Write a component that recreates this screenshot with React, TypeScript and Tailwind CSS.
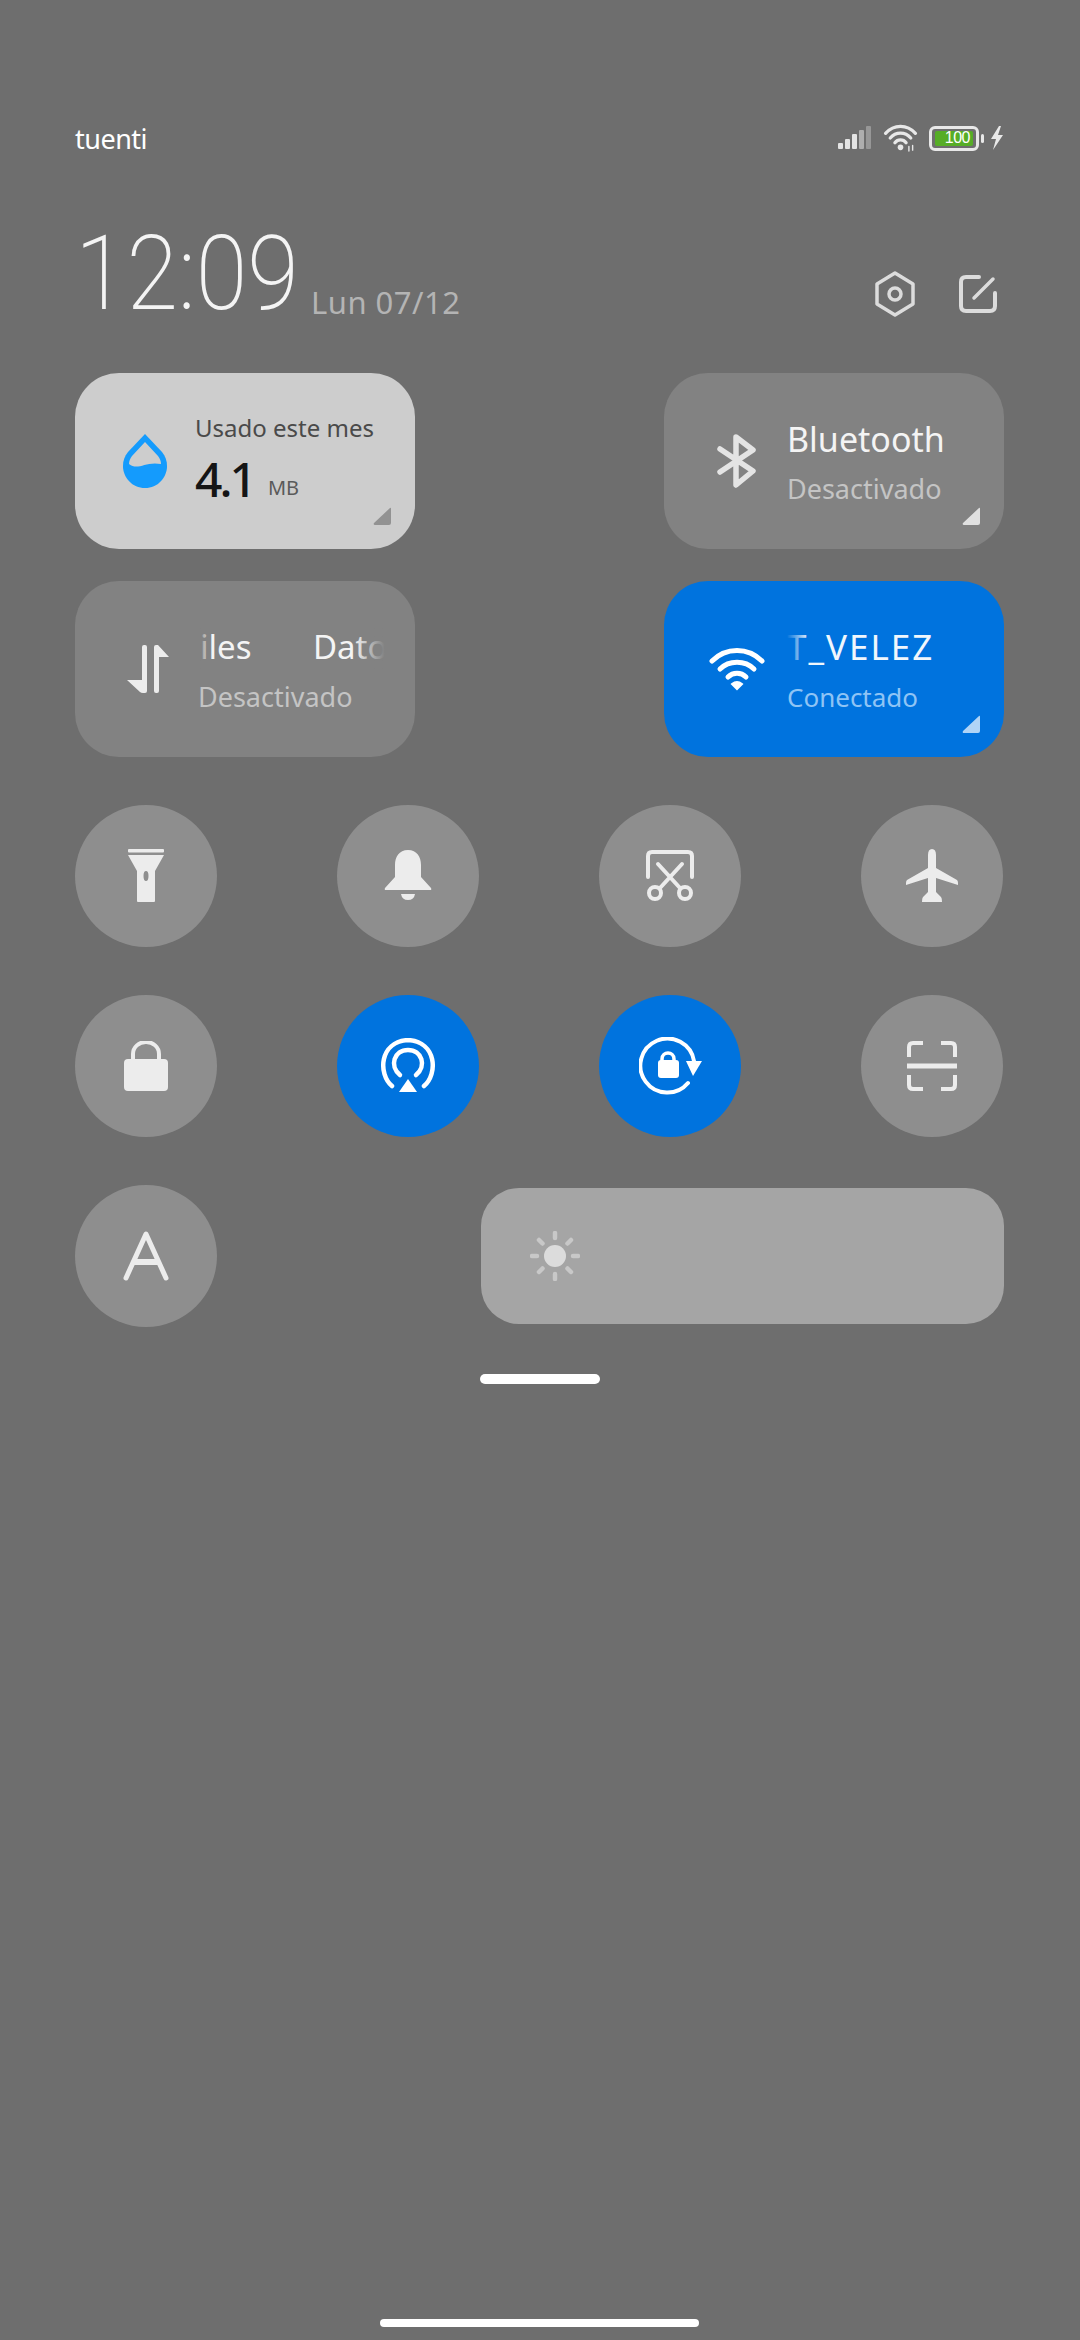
import { ReactNode } from "react";

const hand = "font-['Noto_Sans','DejaVu_Sans',sans-serif]";

function Signal() {
  return (
    <svg width="34" height="24" viewBox="0 0 34 24" fill="#e4e4e4">
      <rect x="0" y="17" width="5" height="6" rx="1" />
      <rect x="7" y="13" width="5" height="10" rx="1" />
      <rect x="14" y="8" width="5" height="15" rx="1" />
      <rect x="21" y="4" width="5" height="19" rx="1" opacity="0.55" />
      <rect x="28" y="0" width="5" height="23" rx="1" opacity="0.35" />
    </svg>
  );
}

function WifiIcon({ size, color }: { size: number; color: string }) {
  return (
    <svg width={size} height={size} viewBox="0 0 56 44" fill="none" stroke={color} strokeLinecap="round" strokeWidth="5">
      <path d="M3 14C17 0 39 0 53 14" />
      <path d="M11 22C20 13 36 13 45 22" />
      <path d="M19 30C24 25 32 25 37 30" />
      <path d="M23 37L28 42L33 37Q28 33 23 37Z" fill={color} strokeWidth="2" />
    </svg>
  );
}

function Corner({ className }: { className: string }) {
  return (
    <svg className="absolute right-[23px] bottom-[23px]" width="19" height="19" viewBox="0 0 19 19">
      <path d="M17 1L1 16Q0 18 2 18H16Q18 18 18 16V2Q18 0 17 1Z" className={className} />
    </svg>
  );
}

function Tile({
  active,
  light,
  icon,
  children,
  corner,
}: {
  active?: boolean;
  light?: boolean;
  icon: ReactNode;
  children: ReactNode;
  corner?: string;
}) {
  const bg = active ? "bg-[#0073de]" : light ? "bg-[#cdcdcd]" : "bg-[#828282]";
  return (
    <div className={`relative flex h-[176px] w-[340px] items-center rounded-[44px] ${bg}`}>
      <div className="ml-[33px] mr-[10px] flex w-[80px] shrink-0 justify-center">{icon}</div>
      <div className="mt-[4px] flex min-w-0 flex-col">{children}</div>
      {corner && <Corner className={corner} />}
    </div>
  );
}

function Round({ active, children }: { active?: boolean; children: ReactNode }) {
  return (
    <div
      className={`flex h-[142px] w-[142px] items-center justify-center rounded-full ${
        active ? "bg-[#0073de]" : "bg-[#8e8e8e]"
      }`}
    >
      {children}
    </div>
  );
}

export default function App() {
  return (
    <div className={`flex h-[2340px] w-[1080px] flex-col bg-[#6e6e6e] pl-[75px] pr-[76px] ${hand}`}>
      {/* status bar */}
      <div className="mt-[119px] flex h-[38px] items-center justify-between">
        <span className="text-[27px] leading-none tracking-[-0.5px] text-white">tuenti</span>
        <div className="flex items-center">
          <Signal />
          <svg className="ml-[11px]" width="35" height="28" viewBox="0 0 36 30" fill="none" stroke="#e8e8e8" strokeWidth="3.5" strokeLinecap="round">
            <path d="M2 10C11 0 25 0 34 10" />
            <path d="M7 15C13 8 23 8 29 15" />
            <path d="M12 20C15 16 21 16 24 20" />
            <circle cx="18" cy="25" r="3" fill="#e8e8e8" stroke="none" />
            <path d="M27 24V29M31 23V28" strokeWidth="1.5" />
          </svg>
          <div className="ml-[11px] flex items-center gap-[2px]">
            <div className="flex h-[25px] w-[50px] items-center rounded-[6px] border-[3px] border-[#e8e8e8] pl-[3px]">
              <div className="flex h-[15px] w-[38px] items-center justify-end rounded-[2px] bg-[#56ad26] pr-[3px] font-['Liberation_Sans',sans-serif] text-[16px] leading-none tracking-[-0.5px] text-white">
                100
              </div>
            </div>
            <div className="h-[9px] w-[3px] rounded-full bg-[#e8e8e8]" />
          </div>
          <svg className="ml-[6px]" width="14" height="26" viewBox="0 0 14 24" fill="#e8e8e8">
            <path d="M9 0L1 13H6L3 24L13 9H8L11 0Z" />
          </svg>
        </div>
      </div>

      {/* clock row */}
      <div className="mt-[70px] flex h-[90px] items-end justify-between">
        <div className="flex items-end">
          <span className="mb-[-2px] w-[236px] origin-left scale-x-[0.9] font-['Roboto',sans-serif] text-[104px] font-extralight leading-[90px] whitespace-nowrap text-[#f4f4f4]">
            12:09
          </span>
          <span className="mb-[-1px] text-[31px] leading-none tracking-[0.5px] text-[#b4b4b4]">
            Lun 07/12
          </span>
        </div>
        <div className="mr-[7px] flex items-center gap-[43px]">
          <svg width="42" height="46" viewBox="0 0 42 46" fill="none" stroke="#dcdcdc" strokeWidth="3.5" strokeLinejoin="round">
            <path d="M21 2L39 13V33L21 44L3 33V13Z" />
            <circle cx="21" cy="23" r="6" />
          </svg>
          <svg width="38" height="38" viewBox="0 0 38 38" fill="none" stroke="#dcdcdc" strokeWidth="4" strokeLinecap="round">
            <path d="M20 2H7Q2 2 2 7V31Q2 36 7 36H31Q36 36 36 31V18" />
            <path d="M34 4L15 23" strokeWidth="3.5" />
          </svg>
        </div>
      </div>

      {/* big tiles */}
      <div className="mt-[56px] flex flex-col gap-[32px]">
        <div className="flex justify-between">
          <Tile
            light
            corner="fill-[#929292]"
            icon={
              <svg className="-translate-x-[3px]" width="46" height="56" viewBox="0 0 46 56">
                <path d="M23 1L6 19C-6 34 5 55 23 55C41 55 52 34 40 19Z" fill="#149bfd" />
                <path d="M23 9L10 23C8 26 7 28 7 31C16 38 23 28 39 31C39 28 38 26 36 23Z" fill="#cdcdcd" />
              </svg>
            }
          >
            <div className="-ml-[3px] -mt-[8px] text-[24px] leading-[34px] whitespace-nowrap text-[#4a4a4a]">
              Usado este mes
            </div>
            <div className="-ml-[3px] mt-[6px] flex items-end">
              <span className="text-[48px] leading-[56px] font-medium tracking-[-3px] text-[#151515]">4.1</span>
              <span className="mb-[9px] ml-[14px] text-[20px] leading-none text-[#5a5a5a]">MB</span>
            </div>
          </Tile>
          <Tile
            corner="fill-[#e0e0e0]"
            icon={
              <svg width="40" height="54" viewBox="0 0 40 54" fill="none" stroke="#e4e4e4" strokeWidth="5.5" strokeLinecap="round" strokeLinejoin="round">
                <path d="M3 15L36 37L19 51V3L36 16L3 38" />
              </svg>
            }
          >
            <div className="text-[34px] leading-[48px] whitespace-nowrap text-[#f4f4f4]">Bluetooth</div>
            <div className="mt-[4px] text-[27px] leading-[44px] text-[#c4c4c4]">Desactivado</div>
          </Tile>
        </div>
        <div className="flex justify-between">
          <Tile
            icon={
              <svg width="42" height="48" viewBox="0 0 42 48" fill="#ececec">
                <path d="M15 2Q15 0 17 0H18Q20 0 20 2V46Q20 48 18 48H16Q14 48 13 47L0 35H15Z" />
                <path d="M27 2Q27 0 29 0H31L42 12H32V46Q32 48 30 48H29Q27 48 27 46Z" />
              </svg>
            }
          >
            <div className="relative h-[48px] w-[192px] overflow-hidden text-[33px] leading-[48px] whitespace-nowrap text-[#f4f4f4]">
              <span className="absolute left-[2px]">iles</span>
              <span className="absolute left-[115px]">Dato</span>
              <div className="absolute inset-y-0 left-0 w-[14px] bg-gradient-to-r from-[#828282] to-transparent" />
              <div className="absolute inset-y-0 right-0 w-[36px] bg-gradient-to-l from-[#828282] from-15% to-transparent" />
            </div>
            <div className="mt-[4px] text-[27px] leading-[44px] text-[#c4c4c4]">Desactivado</div>
          </Tile>
          <Tile active corner="fill-[#b0d4f6]" icon={<WifiIcon size={56} color="#ffffff" />}>
            <div className="relative h-[48px] w-[187px] overflow-hidden text-[35px] leading-[48px] tracking-[2px] whitespace-nowrap text-[#f0f7fd]">
              <span>T_VELEZ</span>
              <div className="absolute inset-y-0 left-0 w-[22px] bg-gradient-to-r from-[#0073de] to-transparent" />
            </div>
            <div className="mt-[4px] text-[26px] leading-[44px] text-[#8fc4f5]">Conectado</div>
          </Tile>
        </div>
      </div>

      {/* round toggles */}
      <div className="mt-[48px] grid grid-cols-[142px_142px_142px_142px] justify-between gap-y-[48px] pr-[1px]">
        <Round>
          <svg width="38" height="54" viewBox="0 0 38 54" fill="#ececec">
            <rect x="1" y="0" width="36" height="3.5" rx="1" />
            <path fillRule="evenodd" d="M1 6H37L28 22V52Q28 53 27 53H11Q10 53 10 52V22ZM19 22Q16.5 22 16.5 27Q16.5 32 19 32Q21.5 32 21.5 27Q21.5 22 19 22Z" />
          </svg>
        </Round>
        <Round>
          <svg width="48" height="52" viewBox="0 0 48 52" fill="#ececec">
            <path d="M24 0C33 0 37 7 37 15V27L47 38Q48 40 46 40H2Q0 40 1 38L11 27V15C11 7 15 0 24 0Z" />
            <path d="M17 44H31Q30 50 24 50Q18 50 17 44Z" />
          </svg>
        </Round>
        <Round>
          <svg width="48" height="52" viewBox="0 0 48 52" fill="none" stroke="#ececec" strokeWidth="4" strokeLinecap="round">
            <path d="M2 27V6Q2 2 6 2H42Q46 2 46 6V27" />
            <path d="M12 14L34 38M36 14L14 38" />
            <circle cx="9" cy="43" r="6" />
            <circle cx="39" cy="43" r="6" />
          </svg>
        </Round>
        <Round>
          <svg width="52" height="54" viewBox="0 0 52 54" fill="#ececec">
            <path d="M26 0Q30 0 30 6V19L51 31Q52 32 52 34V36L30 29V43L35 48Q36 49 36 53H16Q16 49 17 48L22 43V29L0 36V34Q0 32 1 31L22 19V6Q22 0 26 0Z" />
          </svg>
        </Round>
        <Round>
          <svg width="44" height="50" viewBox="0 0 44 50" fill="#ececec">
            <path d="M9 19V13C9 6 15 1 22 1C29 1 35 6 35 13V19" fill="none" stroke="#ececec" strokeWidth="4" />
            <rect x="0" y="18" width="44" height="32" rx="4" />
          </svg>
        </Round>
        <Round active>
          <svg width="56" height="56" viewBox="0 0 56 56" fill="none" stroke="#ffffff" strokeWidth="4.5" strokeLinecap="round">
            <path d="M12 48C-2 36 -1 4 28 2C57 4 58 36 44 48" />
            <path d="M20 37C9 28 14 12 28 12C42 12 47 28 36 37" />
            <path d="M28 41L37 54H19Z" fill="#ffffff" stroke="none" />
          </svg>
        </Round>
        <Round active>
          <svg className="translate-x-[1px]" width="64" height="58" viewBox="0 0 64 58" fill="none" stroke="#ffffff" strokeWidth="4" strokeLinecap="round">
            <path d="M49 46A27 27 0 1 1 55 24" />
            <path d="M47 24H63L54 39Z" fill="#ffffff" stroke="none" />
            <path d="M23 25V22C23 14 35 14 35 22V25" strokeWidth="3.5" />
            <rect x="19" y="23" width="21" height="18" rx="3" fill="#ffffff" stroke="none" />
          </svg>
        </Round>
        <Round>
          <svg width="50" height="50" viewBox="0 0 50 50" fill="none" stroke="#ececec" strokeWidth="4">
            <path d="M16 2H6Q2 2 2 6V16M34 2H44Q48 2 48 6V16M2 34V44Q2 48 6 48H16M48 34V44Q48 48 44 48H34" />
            <path d="M0 25H50" strokeWidth="5" />
          </svg>
        </Round>
      </div>

      {/* last row */}
      <div className="mt-[48px] flex items-center justify-between">
        <Round>
          <svg width="46" height="50" viewBox="0 0 46 50" fill="none" stroke="#ececec" strokeWidth="5" strokeLinecap="round" strokeLinejoin="round">
            <path d="M3 47L23 3L43 47" />
            <path d="M10 31H36" strokeWidth="6" strokeLinecap="butt" />
          </svg>
        </Round>
        <div className="flex h-[136px] w-[523px] items-center rounded-[38px] bg-[#a5a5a5] pl-[49px]">
          <svg width="50" height="50" viewBox="0 0 50 50" fill="none" stroke="#c8c8c8" strokeWidth="4.5" strokeLinecap="round">
            <circle cx="25" cy="25" r="11" fill="#dcdcdc" stroke="none" />
            <path d="M25 2V7M25 43V48M2 25H7M43 25H48M9 9L12.5 12.5M37.5 37.5L41 41M41 9L37.5 12.5M12.5 37.5L9 41" />
          </svg>
        </div>
      </div>

      {/* handle */}
      <div className="mt-[47px] flex justify-center">
        <div className="h-[10px] w-[120px] rounded-full bg-white" />
      </div>

      <div className="mt-auto mb-[13px] flex justify-center">
        <div className="h-[8px] w-[319px] rounded-full bg-white" />
      </div>
    </div>
  );
}
